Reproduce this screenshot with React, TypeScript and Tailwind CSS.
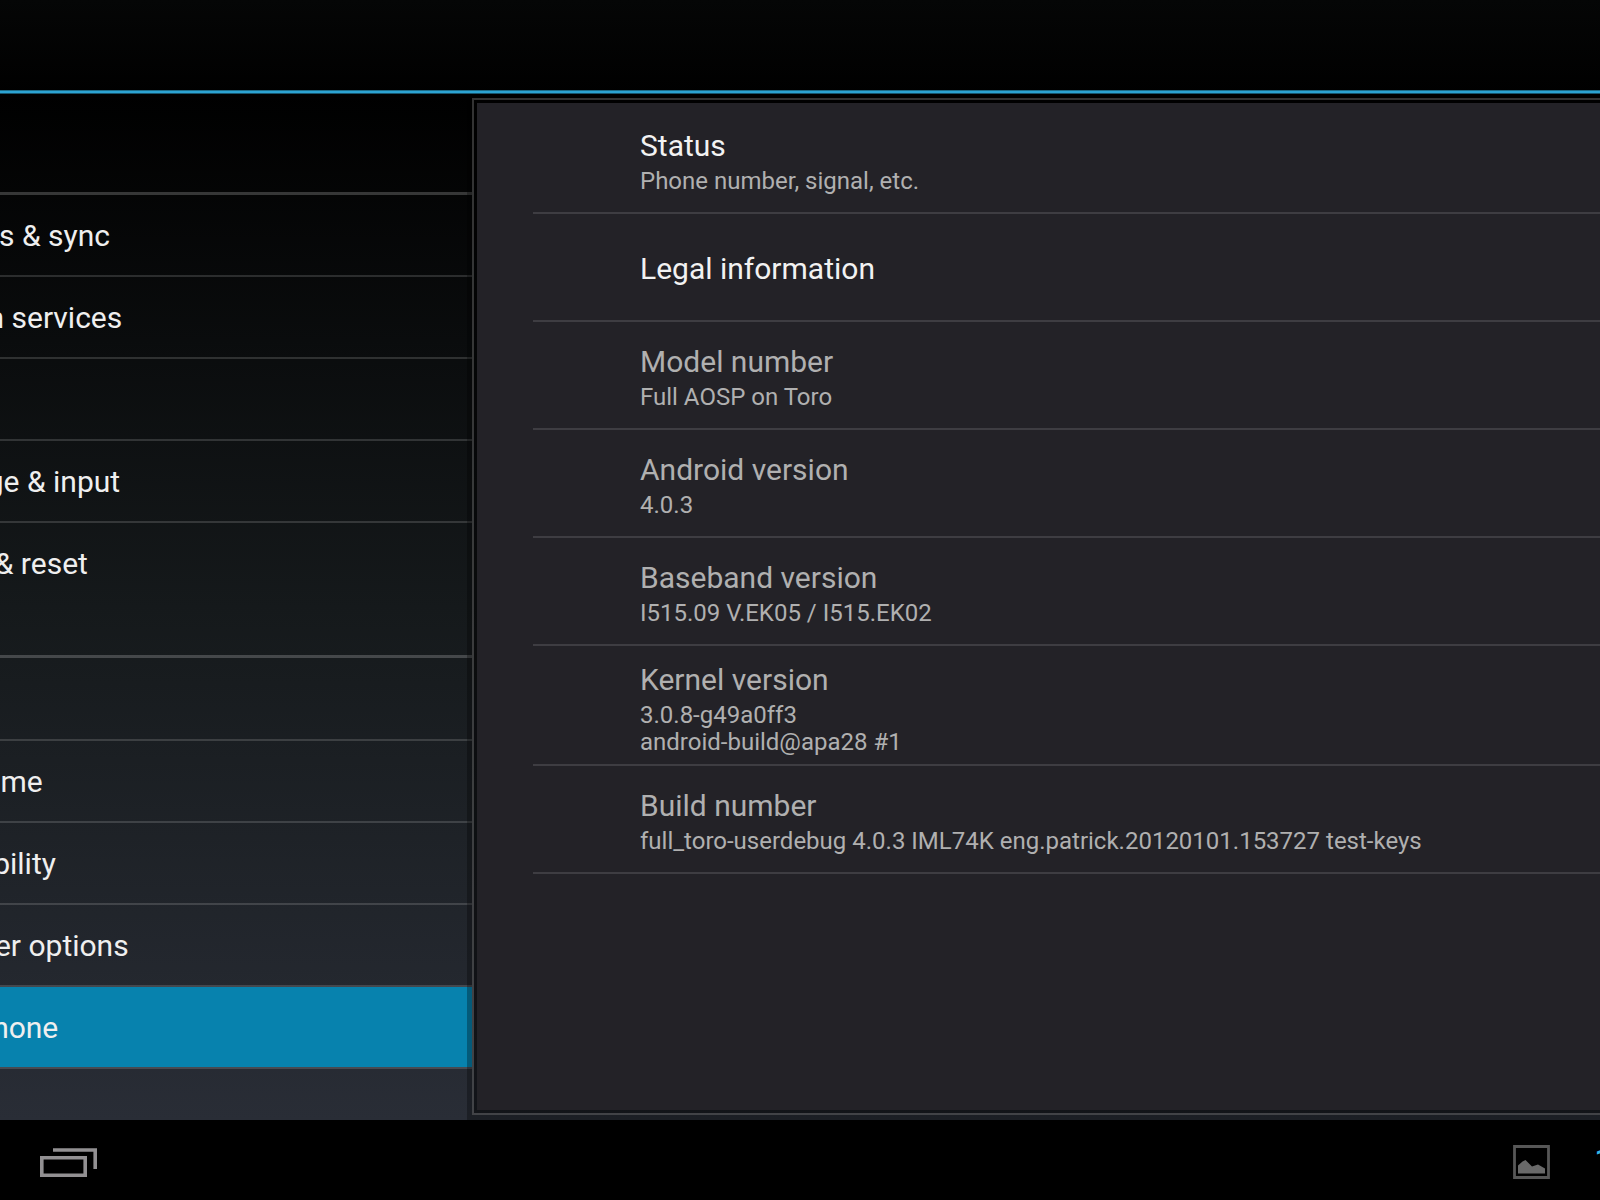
interface Category {
  label: string;
  active?: boolean;
}

interface Preference {
  title: string;
  summary?: string[];
  enabled?: boolean;
}

const personal: Category[] = [
  { label: 'Accounts & sync' },
  { label: 'Location services' },
  { label: 'Security' },
  { label: 'Language & input' },
  { label: 'Backup & reset' },
];

const system: Category[] = [
  { label: 'Date & time' },
  { label: 'Accessibility' },
  { label: 'Developer options' },
  { label: 'About phone', active: true },
];

const preferences: Preference[] = [
  { title: 'Status', summary: ['Phone number, signal, etc.'], enabled: true },
  { title: 'Legal information', enabled: true },
  { title: 'Model number', summary: ['Full AOSP on Toro'] },
  { title: 'Android version', summary: ['4.0.3'] },
  { title: 'Baseband version', summary: ['I515.09 V.EK05 / I515.EK02'] },
  { title: 'Kernel version', summary: ['3.0.8-g49a0ff3', 'android-build@apa28 #1'] },
  { title: 'Build number', summary: ['full_toro-userdebug 4.0.3 IML74K eng.patrick.20120101.153727 test-keys'] },
];

function CategoryList({ items }: { items: Category[] }) {
  return (
    <ul className="divide-y-2 divide-white/15">
      {items.map((item) => (
        <li key={item.label}>
          <a
            href="#"
            className={`flex h-20 items-center pt-0.5 text-[30px] leading-9 whitespace-nowrap text-[#efefef] ${
              item.active ? 'bg-[#0782ae]' : ''
            }`}>
            <span className="-ml-28">{item.label}</span>
          </a>
        </li>
      ))}
    </ul>
  );
}

function PreferenceRow({ title, summary = [], enabled }: Preference) {
  return (
    <li
      className={`flex flex-col justify-center border-b-2 border-[#3e3d42] pl-[107px] ${
        summary.length > 1 ? 'h-30 pt-2' : 'h-27 pt-1'
      }`}>
      <div className={`text-[30px] leading-9 ${enabled ? 'text-[#f2f2f2]' : 'text-[#b0b0b0]'}`}>{title}</div>
      {summary.length > 0 && (
        <div className="mt-1 text-2xl leading-[27px] text-[#b0b0b0]">
          {summary.map((line) => (
            <p key={line}>{line}</p>
          ))}
        </div>
      )}
    </li>
  );
}

function RecentsIcon() {
  return (
    <svg width="58" height="30" viewBox="0 0 58 30" fill="none" stroke="#929092" strokeWidth="3.6">
      <path d="M1.8 9.8H45.2V27.2H1.8Z" />
      <path d="M13 2H55.2V21" />
    </svg>
  );
}

function PictureIcon() {
  return (
    <svg width="37" height="34" viewBox="0 0 37 34">
      <path d="M1.5 1.5H35.5V32.5H1.5Z" fill="none" stroke="#575757" strokeWidth="2.8" />
      <path d="M5 28.5V20.5L9.5 16.5L12.5 15L19 21.5L25 19.5L32 23.5V28.5Z" fill="#696969" />
    </svg>
  );
}

export default function App() {
  return (
    <div className="flex h-screen flex-col overflow-hidden bg-black font-[Roboto,sans-serif]">
      <header className="shrink-0 bg-linear-to-b/srgb from-[#050606] to-black pt-[90px]">
        <div className="h-1 border-y border-t-[#1c6c88] border-b-[#17556c] bg-[#2ca3d2]" />
      </header>

      <div className="flex min-h-0 flex-1 bg-linear-to-b/srgb from-black via-[#15191b] to-[#292d36]">
        <nav className="w-[30%] max-w-[472px] shrink-0 overflow-hidden">
          <div className="h-[101px] border-b-3 border-white/20" />
          <CategoryList items={personal} />
          <div className="h-[55px] border-b-3 border-white/20" />
          <div className="h-[83px] border-b-2 border-white/15" />
          <CategoryList items={system} />
          <div className="border-b-2 border-white/15" />
        </nav>

        <main className="-ml-[5px] flex min-w-0 flex-1 bg-black/30 pt-1 pb-[5px] pl-[5px]">
          <div className="flex flex-1 border-y-2 border-l-2 border-white/20 bg-black/30 pt-[3px] pb-[3px] pl-[3px]">
            <ul className="flex-1 bg-[#232227] pt-[3px] pl-14">
              {preferences.map((item) => (
                <PreferenceRow key={item.title} {...item} />
              ))}
            </ul>
          </div>
        </main>
      </div>

      <footer className="flex h-20 shrink-0 items-center justify-between overflow-hidden bg-black pt-1 pl-10">
        <button aria-label="Recent apps" className="mt-0.5">
          <RecentsIcon />
        </button>
        <div className="flex items-center gap-11">
          <PictureIcon />
          <span className="w-1.5 overflow-hidden text-4xl text-[#33b5e5]">1</span>
        </div>
      </footer>
    </div>
  );
}
